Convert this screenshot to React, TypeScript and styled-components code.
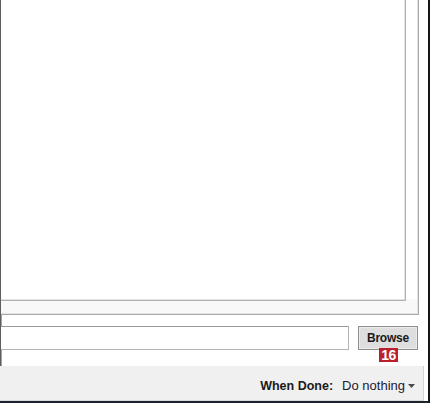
import React from 'react';
import styled, { createGlobalStyle } from 'styled-components';

const GlobalStyle = createGlobalStyle`
  html, body {
    margin: 0;
    padding: 0;
    background: #ffffff;
  }
  body {
    font-family: "Liberation Sans", Arial, sans-serif;
  }
`;

const Frame = styled.div`
  width: 430px;
  height: 403px;
  box-sizing: border-box;
  display: flex;
  flex-direction: column;
  overflow: hidden;
  background: #ffffff;
  border-right: 2px solid #151515;
  border-bottom: 2px solid #1c2430;
`;

const Body = styled.div`
  flex: 1;
  display: flex;
  flex-direction: column;
  min-height: 0;
  overflow: hidden;
  border-left: 1px solid #5e5e5e;
  box-shadow: inset 1px 0 0 #a2a2a2;
  padding-bottom: 16px;
`;

const GroupBox = styled.div`
  flex: 1;
  display: flex;
  flex-direction: column;
  margin: -10px 9px 0 -12px;
  padding: 0 12px 13px 0;
  border: 1px solid #a8a8a8;
  box-shadow: inset 0 0 0 1px #e4e4e4;
  background: linear-gradient(to bottom, #ffffff calc(100% - 15px), #f8f8f8 calc(100% - 15px));
`;

const FileList = styled.div`
  flex: 1;
  margin-left: -4px;
  border: 1px solid #b2b2b2;
  box-shadow: inset 0 0 0 1px #e2e2e2;
  background: #ffffff;
`;

const InputRow = styled.div`
  display: flex;
  align-items: stretch;
  gap: 9px;
  height: 24px;
  margin: 11px 10px 0 -10px;
`;

const PathInput = styled.div`
  flex: 1;
  box-sizing: border-box;
  border: 1px solid #b4b4b4;
  border-top-color: #9a9a9a;
  background: #ffffff;
`;

const BrowseButton = styled.button`
  position: relative;
  width: 60px;
  box-sizing: border-box;
  padding: 0;
  border: 1px solid #8e8e8e;
  box-shadow: inset 0 0 0 1px #ececec;
  background: #dedede;
  font-family: "Liberation Sans", Arial, sans-serif;
  font-weight: bold;
  font-size: 12px;
  letter-spacing: -0.2px;
  color: #1a1a1a;
  cursor: pointer;
`;

const Badge = styled.span`
  position: absolute;
  left: 20px;
  top: 21px;
  width: 19px;
  height: 14px;
  display: flex;
  align-items: center;
  justify-content: center;
  background: #bb1f2c;
  color: #ffffff;
  font-family: "Liberation Sans", Arial, sans-serif;
  font-weight: bold;
  font-size: 14px;
  letter-spacing: -0.5px;
  line-height: 1;
`;

const Footer = styled.div`
  height: 35px;
  box-sizing: border-box;
  display: flex;
  align-items: center;
  justify-content: flex-end;
  padding: 5px 8px 0 0;
  margin-right: 4px;
  background: #f0f0f0;
  border-right: 1px solid #d4d4d4;
  border-bottom: 1px solid #d8d8d8;
  color: #1a1a1a;
`;

const Label = styled.span`
  font-weight: bold;
  font-size: 12.5px;
  margin-right: 9px;
`;

const Dropdown = styled.span`
  display: flex;
  align-items: center;
  gap: 3px;
  font-size: 13px;
  color: #1a2030;
`;

const Caret = () => (
  <svg width="7" height="4" viewBox="0 0 7 4">
    <path d="M0 0 L7 0 L3.5 4 Z" fill="#4a4a4a" />
  </svg>
);

export default function App() {
  return (
    <>
      <GlobalStyle />
      <Frame>
        <Body>
          <GroupBox>
            <FileList />
          </GroupBox>
          <InputRow>
            <PathInput />
            <BrowseButton>
              Browse
              <Badge>16</Badge>
            </BrowseButton>
          </InputRow>
        </Body>
        <Footer>
          <Label>When Done:</Label>
          <Dropdown>
            Do nothing
            <Caret />
          </Dropdown>
        </Footer>
      </Frame>
    </>
  );
}
